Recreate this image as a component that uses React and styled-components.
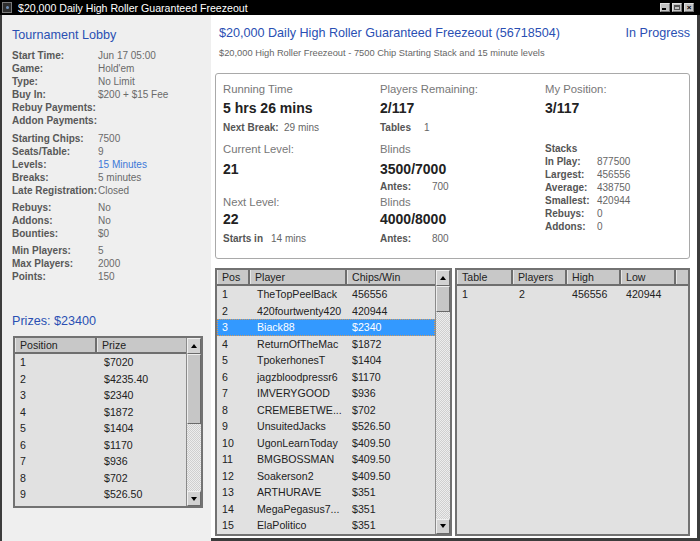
import React from 'react';
import styled, { createGlobalStyle } from 'styled-components';

const GlobalStyle = createGlobalStyle`
  html, body { margin: 0; padding: 0; background: #fff; }
  body { font-family: "Liberation Sans", Arial, sans-serif; overflow: hidden; }
  * { box-sizing: border-box; }
`;

const BLUE = '#2a4fb3';

const Window = styled.div`
  width: 700px;
  height: 541px;
  display: flex;
  flex-direction: column;
  background: #000;
  overflow: hidden;
`;

const TitleBar = styled.div`
  height: 15px;
  flex: none;
  display: flex;
  align-items: center;
  padding: 0 6px 0 2px;
  background: #000;
  color: #fff;
  font-size: 10.6px;
`;

const AppIcon = styled.div`
  width: 10px;
  height: 11px;
  margin-right: 6px;
  background: #2e2e2e;
  border: 1px solid #7a7a7a;
  display: flex;
  align-items: center;
  justify-content: center;
  &::after {
    content: '';
    width: 3px;
    height: 3px;
    border-radius: 50%;
    background: #6e8fb8;
  }
`;

const TitleText = styled.span`
  flex: 1;
  white-space: nowrap;
`;

const WinButtons = styled.div`
  display: flex;
  gap: 2px;
`;

const WinButton = styled.div`
  width: 10px;
  height: 9px;
  background: #c2c2c2;
  border: 1px solid #e0e0e0;
  border-right-color: #777;
  border-bottom-color: #777;
  position: relative;
  color: #000;
  font-size: 8px;
  line-height: 7px;
  text-align: center;
  font-weight: bold;
`;

const MinGlyph = styled.div`
  position: absolute;
  left: 1px;
  bottom: 1px;
  width: 4px;
  height: 2px;
  background: #000;
`;

const MaxGlyph = styled.div`
  position: absolute;
  left: 1px;
  top: 1px;
  width: 6px;
  height: 5px;
  border: 1px solid #555;
  border-top-width: 2px;
`;

const Body = styled.div`
  flex: 1;
  display: grid;
  grid-template-columns: 209px 1fr;
  border-left: 2px solid #3c3c3c;
  border-right: 3px solid #3c3c3c;
  border-bottom: 3px solid #3c3c3c;
  background: #fff;
  min-height: 0;
`;

const LeftPanel = styled.div`
  background: #efefef;
  padding: 11px 0 0 10px;
  display: flex;
  flex-direction: column;
`;

const BlueHeading = styled.div`
  color: ${BLUE};
  font-size: 12.6px;
  line-height: 18px;
  margin-top: ${p => p.$top || 0}px;
`;

const InfoGroup = styled.div`
  margin-top: ${p => p.$top}px;
`;

const InfoRow = styled.div`
  display: grid;
  grid-template-columns: 86px 1fr;
  font-size: 10px;
  line-height: 13px;
  white-space: nowrap;
`;

const InfoLabel = styled.span`
  font-weight: bold;
  color: #585858;
`;

const InfoValue = styled.span`
  color: ${p => (p.$link ? '#3b78d8' : '#6a6a6a')};
`;

const PrizeWrap = styled.div`
  margin: 6px 0 0 1px;
  width: 190px;
`;

const MainPanel = styled.div`
  padding: 10px 7px 10px 4px;
  display: flex;
  flex-direction: column;
  min-width: 0;
`;

const HeaderRow = styled.div`
  display: flex;
  justify-content: space-between;
  color: ${BLUE};
  font-size: 12.6px;
  line-height: 16px;
  padding-left: 4px;
`;

const SubTitle = styled.div`
  color: #666;
  font-size: 9.3px;
  line-height: 14px;
  margin-top: 5px;
  padding-left: 4px;
`;

const StatsBox = styled.div`
  margin-top: 13px;
  height: 186px;
  flex: none;
  border: 1px solid #a9a9a9;
  border-radius: 3px;
  padding: 6px 7px 0 7px;
  display: grid;
  grid-template-columns: 157px 165px 1fr;
  grid-template-rows: 18px 19px 21px 21px 19px 18px 11px 24px 16px;
  align-items: center;
`;

const StatLabel = styled.div`
  font-size: 11.3px;
  color: #777;
  line-height: 12px;
  grid-column: ${p => p.$col};
  grid-row: ${p => p.$row};
`;

const StatBig = styled.div`
  font-size: 14px;
  font-weight: bold;
  color: #222;
  line-height: 16px;
  grid-column: ${p => p.$col};
  grid-row: ${p => p.$row};
`;

const StatSub = styled.div`
  display: grid;
  grid-template-columns: ${p => p.$lw}px auto;
  justify-content: start;
  font-size: 10px;
  line-height: 12px;
  grid-column: ${p => p.$col};
  grid-row: ${p => p.$row};
`;

const SubLabel = styled.span`
  font-weight: bold;
  color: #555;
`;

const SubValue = styled.span`
  color: #666;
`;

const StacksBlock = styled.div`
  grid-column: 3;
  grid-row: 4 / span 6;
  align-self: start;
  padding-top: 4px;
  font-size: 10px;
  line-height: 13px;
`;

const StacksTitle = styled.div`
  font-weight: bold;
  color: #555;
`;

const StackRow = styled.div`
  display: grid;
  grid-template-columns: 52px auto;
  justify-content: start;
`;

const TablesArea = styled.div`
  margin-top: 9px;
  flex: 1;
  display: grid;
  grid-template-columns: 237px 1fr;
  gap: 3px;
  min-height: 0;
`;

/* ---------- table ---------- */

const TableFrame = styled.div`
  height: ${p => p.$height};
  border: 2px solid #727272;
  background: #e1e1e1;
  display: flex;
  overflow: hidden;
`;

const TableMain = styled.div`
  flex: 1;
  min-width: 0;
  display: flex;
  flex-direction: column;
  overflow: hidden;
`;

const THead = styled.div`
  display: grid;
  grid-template-columns: ${p => p.$tpl};
  height: 16px;
  flex: none;
  background: #c8c8c8;
  border-bottom: 2px solid #6e6e6e;
`;

const TH = styled.div`
  font-size: 10.6px;
  line-height: 14px;
  color: #222;
  padding-left: 5px;
  border-right: 2px solid #6e6e6e;
  box-shadow: inset 1px 0 0 #e6e6e6;
  white-space: nowrap;
  overflow: hidden;
  &:last-child { border-right: 0; }
`;

const TRow = styled.div`
  display: grid;
  grid-template-columns: ${p => p.$tpl};
  height: 16.5px;
  flex: none;
  align-items: center;
  font-size: 10.6px;
  color: ${p => (p.$selected ? '#fff' : '#222')};
  background: ${p => (p.$selected ? '#3399ff' : 'transparent')};
  outline: ${p => (p.$selected ? '1px dotted #d09a60' : 'none')};
  outline-offset: -1px;
`;

const TD = styled.div`
  padding-left: ${p => p.$pad || 5}px;
  white-space: nowrap;
  overflow: hidden;
`;

const ScrollBar = styled.div`
  width: 15px;
  flex: none;
  display: flex;
  flex-direction: column;
  border-left: 1px solid #8a8a8a;
`;

const ScrollBtn = styled.div`
  height: ${p => p.$h}px;
  flex: none;
  background: #d2d2d2;
  border: 1px solid #f0f0f0;
  border-right-color: #6a6a6a;
  border-bottom-color: #6a6a6a;
  display: flex;
  align-items: center;
  justify-content: center;
`;

const Arrow = styled.div`
  width: 0;
  height: 0;
  border-left: 3.5px solid transparent;
  border-right: 3.5px solid transparent;
  ${p => (p.$down ? 'border-top: 4px solid #000;' : 'border-bottom: 4px solid #000;')}
`;

const Track = styled.div`
  flex: 1;
  background: repeating-conic-gradient(#cfcfcf 0 25%, #ededed 0 50%) 0 0 / 2px 2px;
`;

const Thumb = styled.div`
  height: ${p => p.$h}px;
  background: #c6c6c6;
  border: 1px solid #eeeeee;
  border-right-color: #6a6a6a;
  border-bottom-color: #6a6a6a;
`;

function DataTable({ columns, rows, selected, scroll, height, thumb, pads }) {
  const tpl = columns.map(c => c.width).join(' ');
  return (
    <TableFrame $height={height}>
      <TableMain>
        <THead $tpl={tpl}>
          {columns.map((c, i) => (
            <TH key={i}>{c.label}</TH>
          ))}
        </THead>
        {rows.map((r, i) => (
          <TRow key={i} $tpl={tpl} $selected={i === selected}>
            {r.map((cell, j) => (
              <TD key={j} $pad={pads ? pads[j] : 5}>{cell}</TD>
            ))}
          </TRow>
        ))}
      </TableMain>
      {scroll && (
        <ScrollBar>
          <ScrollBtn $h={16}>
            <Arrow />
          </ScrollBtn>
          <Track>
            <Thumb $h={thumb} />
          </Track>
          <ScrollBtn $h={15}>
            <Arrow $down />
          </ScrollBtn>
        </ScrollBar>
      )}
    </TableFrame>
  );
}

const info = [
  [
    ['Start Time:', 'Jun 17 05:00'],
    ['Game:', "Hold'em"],
    ['Type:', 'No Limit'],
    ['Buy In:', '$200 + $15 Fee'],
    ['Rebuy Payments:', ''],
    ['Addon Payments:', ''],
  ],
  [
    ['Starting Chips:', '7500'],
    ['Seats/Table:', '9'],
    ['Levels:', '15 Minutes', true],
    ['Breaks:', '5 minutes'],
    ['Late Registration:', 'Closed'],
  ],
  [
    ['Rebuys:', 'No'],
    ['Addons:', 'No'],
    ['Bounties:', '$0'],
  ],
  [
    ['Min Players:', '5'],
    ['Max Players:', '2000'],
    ['Points:', '150'],
  ],
];

const groupGaps = [5, 5, 4, 4];

const prizes = [
  ['1', '$7020'],
  ['2', '$4235.40'],
  ['3', '$2340'],
  ['4', '$1872'],
  ['5', '$1404'],
  ['6', '$1170'],
  ['7', '$936'],
  ['8', '$702'],
  ['9', '$526.50'],
  ['10', '$409.50'],
];

const players = [
  ['1', 'TheTopPeelBack', '456556'],
  ['2', '420fourtwenty420', '420944'],
  ['3', 'Biack88', '$2340'],
  ['4', 'ReturnOfTheMac', '$1872'],
  ['5', 'TpokerhonesT', '$1404'],
  ['6', 'jagzbloodpressr6', '$1170'],
  ['7', 'IMVERYGOOD', '$936'],
  ['8', 'CREMEBETWE...', '$702'],
  ['9', 'UnsuitedJacks', '$526.50'],
  ['10', 'UgonLearnToday', '$409.50'],
  ['11', 'BMGBOSSMAN', '$409.50'],
  ['12', 'Soakerson2', '$409.50'],
  ['13', 'ARTHURAVE', '$351'],
  ['14', 'MegaPegasus7...', '$351'],
  ['15', 'ElaPolitico', '$351'],
];

const stacks = [
  ['In Play:', '877500'],
  ['Largest:', '456556'],
  ['Average:', '438750'],
  ['Smallest:', '420944'],
  ['Rebuys:', '0'],
  ['Addons:', '0'],
];

export default function App() {
  return (
    <>
      <GlobalStyle />
      <Window>
        <TitleBar>
          <AppIcon />
          <TitleText>$20,000 Daily High Roller Guaranteed Freezeout</TitleText>
          <WinButtons>
            <WinButton><MinGlyph /></WinButton>
            <WinButton><MaxGlyph /></WinButton>
            <WinButton>×</WinButton>
          </WinButtons>
        </TitleBar>
        <Body>
          <LeftPanel>
            <BlueHeading>Tournament Lobby</BlueHeading>
            {info.map((group, gi) => (
              <InfoGroup key={gi} $top={groupGaps[gi]}>
                {group.map(([l, v, link]) => (
                  <InfoRow key={l}>
                    <InfoLabel>{l}</InfoLabel>
                    <InfoValue $link={link}>{v}</InfoValue>
                  </InfoRow>
                ))}
              </InfoGroup>
            ))}
            <BlueHeading $top={29}>Prizes: $23400</BlueHeading>
            <PrizeWrap>
              <DataTable
                height="172px"
                columns={[
                  { label: 'Position', width: '82px' },
                  { label: 'Prize', width: '1fr' },
                ]}
                pads={[5, 7]}
                rows={prizes}
                scroll
                thumb={70}
              />
            </PrizeWrap>
          </LeftPanel>
          <MainPanel>
            <HeaderRow>
              <span>$20,000 Daily High Roller Guaranteed Freezeout (56718504)</span>
              <span>In Progress</span>
            </HeaderRow>
            <SubTitle>
              $20,000 High Roller Freezeout - 7500 Chip Starting Stack and 15 minute levels
            </SubTitle>
            <StatsBox>
              <StatLabel $col={1} $row={1}>Running Time</StatLabel>
              <StatBig $col={1} $row={2}>5 hrs 26 mins</StatBig>
              <StatSub $col={1} $row={3} $lw={61}>
                <SubLabel>Next Break:</SubLabel>
                <SubValue>29 mins</SubValue>
              </StatSub>
              <StatLabel $col={1} $row={4}>Current Level:</StatLabel>
              <StatBig $col={1} $row={5}>21</StatBig>
              <StatLabel $col={1} $row={7}>Next Level:</StatLabel>
              <StatBig $col={1} $row={8}>22</StatBig>
              <StatSub $col={1} $row={9} $lw={48}>
                <SubLabel>Starts in</SubLabel>
                <SubValue>14 mins</SubValue>
              </StatSub>

              <StatLabel $col={2} $row={1}>Players Remaining:</StatLabel>
              <StatBig $col={2} $row={2}>2/117</StatBig>
              <StatSub $col={2} $row={3} $lw={44}>
                <SubLabel>Tables</SubLabel>
                <SubValue>1</SubValue>
              </StatSub>
              <StatLabel $col={2} $row={4}>Blinds</StatLabel>
              <StatBig $col={2} $row={5}>3500/7000</StatBig>
              <StatSub $col={2} $row={6} $lw={52}>
                <SubLabel>Antes:</SubLabel>
                <SubValue>700</SubValue>
              </StatSub>
              <StatLabel $col={2} $row={7}>Blinds</StatLabel>
              <StatBig $col={2} $row={8}>4000/8000</StatBig>
              <StatSub $col={2} $row={9} $lw={52}>
                <SubLabel>Antes:</SubLabel>
                <SubValue>800</SubValue>
              </StatSub>

              <StatLabel $col={3} $row={1}>My Position:</StatLabel>
              <StatBig $col={3} $row={2}>3/117</StatBig>
              <StacksBlock>
                <StacksTitle>Stacks</StacksTitle>
                {stacks.map(([l, v]) => (
                  <StackRow key={l}>
                    <SubLabel>{l}</SubLabel>
                    <SubValue>{v}</SubValue>
                  </StackRow>
                ))}
              </StacksBlock>
            </StatsBox>
            <TablesArea>
              <DataTable
                height="100%"
                columns={[
                  { label: 'Pos', width: '33px' },
                  { label: 'Player', width: '97px' },
                  { label: 'Chips/Win', width: '1fr' },
                ]}
                pads={[5, 7, 5]}
                rows={players}
                selected={2}
                scroll
                thumb={26}
              />
              <DataTable
                height="100%"
                columns={[
                  { label: 'Table', width: '56px' },
                  { label: 'Players', width: '54px' },
                  { label: 'High', width: '54px' },
                  { label: 'Low', width: '55px' },
                  { label: '', width: '1fr' },
                ]}
                pads={[5, 6, 5, 5, 5]}
                rows={[['1', '2', '456556', '420944', '']]}
              />
            </TablesArea>
          </MainPanel>
        </Body>
      </Window>
    </>
  );
}
